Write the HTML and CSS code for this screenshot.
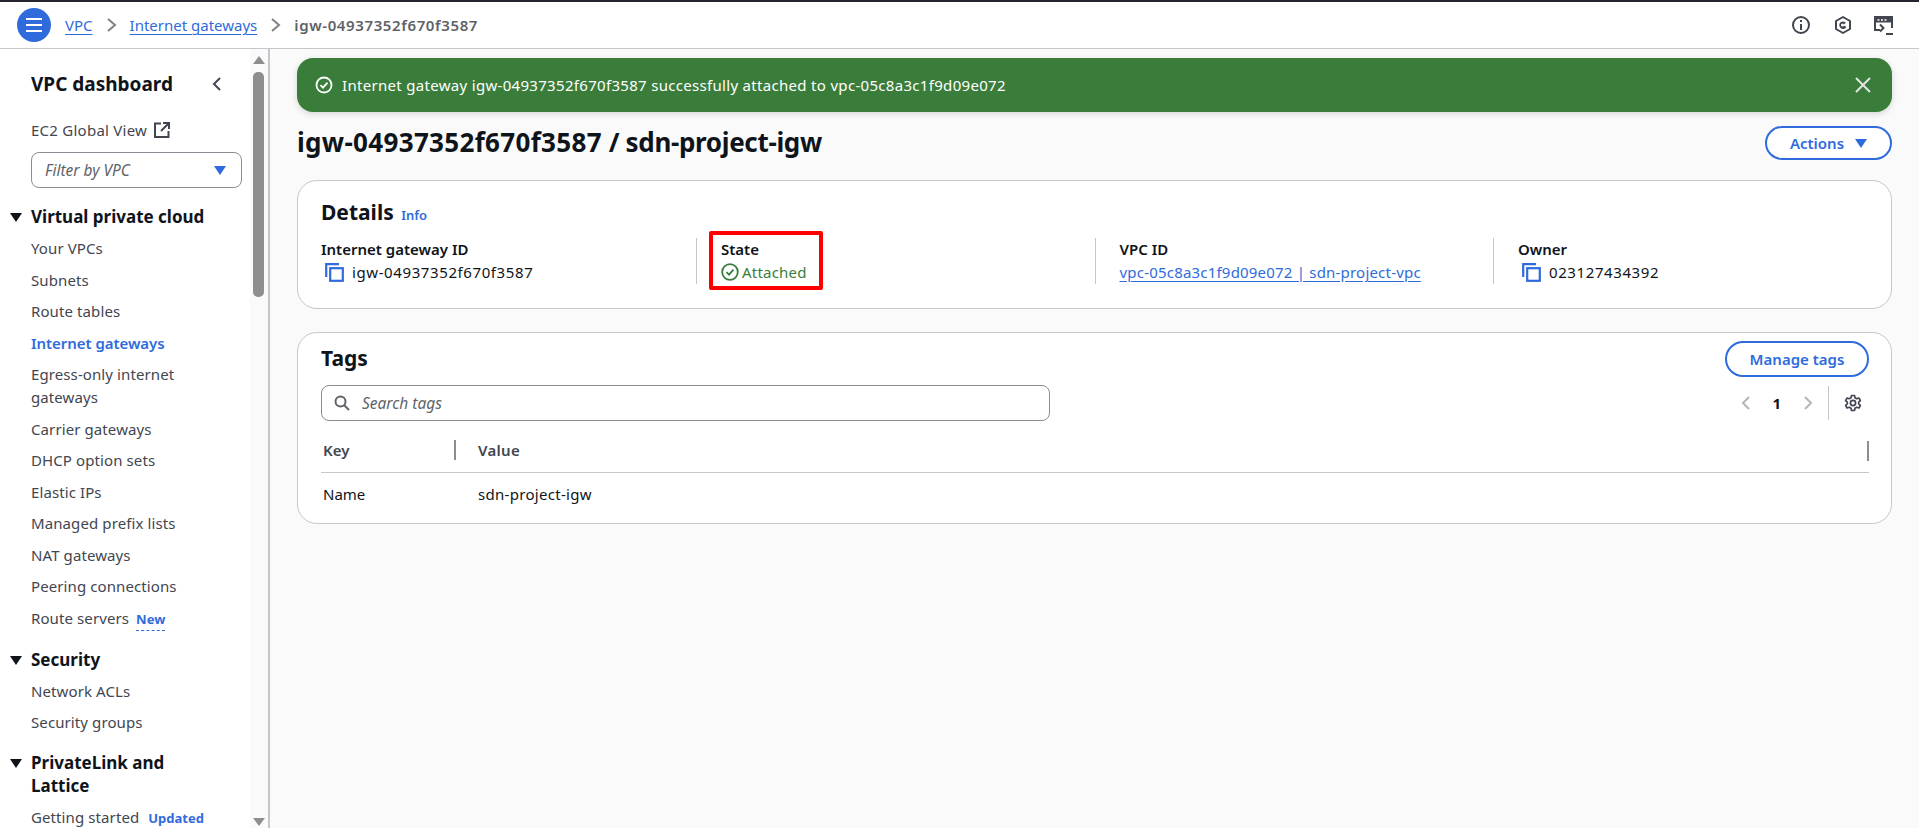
FILE: index.html
```html
<!DOCTYPE html>
<html lang="en">
<head>
<meta charset="utf-8">
<title>igw-04937352f670f3587</title>
<link rel="stylesheet" href="styles.css">
</head>
<body>
<header class="topbar">
  <button class="menu-btn" aria-label="Menu">
    <svg width="20" height="16" viewBox="0 0 20 16"><path d="M2 2h16M2 8h16M2 14h16" stroke="#fff" stroke-width="2" fill="none"/></svg>
  </button>
  <nav class="crumbs">
    <a class="link" href="#">VPC</a>
    <svg class="crumb-sep" width="12" height="16" viewBox="0 0 12 16"><path d="M2 2l7 6-7 6" stroke="#7d8188" stroke-width="2" fill="none"/></svg>
    <a class="link" href="#">Internet gateways</a>
    <svg class="crumb-sep" width="12" height="16" viewBox="0 0 12 16"><path d="M2 2l7 6-7 6" stroke="#7d8188" stroke-width="2" fill="none"/></svg>
    <span class="crumb-current">igw-04937352f670f3587</span>
  </nav>
  <div class="top-icons">
    <svg width="20" height="20" viewBox="0 0 20 20"><circle cx="10" cy="10" r="8" stroke="#424650" stroke-width="2" fill="none"/><path d="M10 9v6" stroke="#424650" stroke-width="2"/><path d="M10 5v2" stroke="#424650" stroke-width="2"/></svg>
    <svg width="20" height="20" viewBox="0 0 20 20"><path d="M10 2l7 4v8l-7 4-7-4V6z" stroke="#424650" stroke-width="2" fill="none" stroke-linejoin="round"/><path d="M13 7.800A3.800 3.800 0 1 0 13.400 12L10 10z" fill="#424650"/><circle cx="9.500" cy="10" r="1.500" fill="#fff"/></svg>
    <svg width="19" height="19" viewBox="0 0 19 19"><path d="M6 14H1V1h17v11" stroke="#424650" stroke-width="2" fill="none"/><path d="M1 4h17" stroke="#424650" stroke-width="5"/><path d="M6 8.500l3.500 3.500L6 15.500M12 18h7" stroke="#424650" stroke-width="2" fill="none"/><path d="M3.500 4h2M7 4h2M10.500 4h2" stroke="#fff" stroke-width="1.500"/></svg>
  </div>
</header>

<div class="shell">
  <aside class="sidebar">
    <div class="side-head">
      <h2 class="side-title">VPC dashboard</h2>
      <svg width="12" height="16" viewBox="0 0 12 16"><path d="M9 2L3 8l6 6" stroke="#424650" stroke-width="2" fill="none"/></svg>
    </div>
    <div class="global-view">
      <span>EC2 Global View</span>
      <svg width="16" height="16" viewBox="0 0 16 16"><path d="M7 1.500H1v13.500h13.500V9" stroke="#424650" stroke-width="2" fill="none"/><path d="M9 1h6v6M15 1L7 9" stroke="#424650" stroke-width="2" fill="none"/></svg>
    </div>
    <div class="vpc-filter">
      <span>Filter by VPC</span>
      <i class="caret blue"></i>
    </div>
    <div class="section first"><i class="caret dark"></i>Virtual private cloud</div>
    <a class="item">Your VPCs</a>
    <a class="item">Subnets</a>
    <a class="item">Route tables</a>
    <a class="item active">Internet gateways</a>
    <a class="item">Egress-only internet gateways</a>
    <a class="item">Carrier gateways</a>
    <a class="item">DHCP option sets</a>
    <a class="item">Elastic IPs</a>
    <a class="item">Managed prefix lists</a>
    <a class="item">NAT gateways</a>
    <a class="item">Peering connections</a>
    <a class="item">Route servers <b class="badge dashed">New</b></a>
    <div class="section"><i class="caret dark"></i>Security</div>
    <a class="item">Network ACLs</a>
    <a class="item">Security groups</a>
    <div class="section"><i class="caret dark"></i>PrivateLink and Lattice</div>
    <a class="item">Getting started <b class="badge updated">Updated</b></a>
    <div class="scroll-track">
      <i class="scroll-up"></i>
      <i class="scroll-thumb"></i>
      <i class="scroll-down"></i>
    </div>
  </aside>

  <main class="content">
    <div class="flash">
      <svg width="18" height="18" viewBox="0 0 18 18"><circle cx="9" cy="9" r="7.500" stroke="#fff" stroke-width="1.800" fill="none"/><path d="M5.500 9.200l2.500 2.500 4.500-5" stroke="#fff" stroke-width="1.800" fill="none"/></svg>
      <span class="flash-text">Internet gateway igw-04937352f670f3587 successfully attached to vpc-05c8a3c1f9d09e072</span>
      <svg class="flash-x" width="16" height="16" viewBox="0 0 16 16"><path d="M1 1l14 14M15 1L1 15" stroke="#e4e4e4" stroke-width="2"/></svg>
    </div>

    <div class="page-head">
      <h1><span class="h1-id">igw-04937352f670f3587</span> <span class="h1-name">/ sdn-project-igw</span></h1>
      <button class="btn actions">Actions <i class="caret blue"></i></button>
    </div>

    <section class="card details">
      <h2 class="card-title">Details <a class="info">Info</a></h2>
      <div class="kv-grid">
        <div class="kv">
          <div class="k">Internet gateway ID</div>
          <div class="v id">
            <svg class="copy" width="19" height="19" viewBox="0 0 19 19"><path d="M1.200 14V1.200H14" stroke="#2f6bdc" stroke-width="2.200" fill="none"/><rect x="5.200" y="5.200" width="12.600" height="12.600" stroke="#2f6bdc" stroke-width="2.200" fill="none"/></svg>
            igw-04937352f670f3587
          </div>
        </div>
        <div class="kv sep">
          <div class="k">State</div>
          <div class="v ok">
            <svg width="18" height="18" viewBox="0 0 18 18"><circle cx="9" cy="9" r="7.800" stroke="#3a7d3a" stroke-width="1.800" fill="none"/><path d="M5.500 9.200l2.500 2.500 4.500-5" stroke="#3a7d3a" stroke-width="1.800" fill="none"/></svg>
            Attached
          </div>
          <div class="highlight"></div>
        </div>
        <div class="kv sep">
          <div class="k">VPC ID</div>
          <div class="v"><a class="link vpc-link" href="#">vpc-05c8a3c1f9d09e072 | sdn-project-vpc</a></div>
        </div>
        <div class="kv sep">
          <div class="k">Owner</div>
          <div class="v id">
            <svg class="copy" width="19" height="19" viewBox="0 0 19 19"><path d="M1.200 14V1.200H14" stroke="#2f6bdc" stroke-width="2.200" fill="none"/><rect x="5.200" y="5.200" width="12.600" height="12.600" stroke="#2f6bdc" stroke-width="2.200" fill="none"/></svg>
            023127434392
          </div>
        </div>
      </div>
    </section>

    <section class="card tags">
      <div class="tags-head">
        <h2 class="card-title">Tags</h2>
        <button class="btn manage">Manage tags</button>
      </div>
      <div class="tools">
        <div class="search">
          <svg width="16" height="16" viewBox="0 0 16 16"><circle cx="6.500" cy="6.500" r="5" stroke="#5f6368" stroke-width="2" fill="none"/><path d="M10 10l5 5" stroke="#5f6368" stroke-width="2"/></svg>
          <span>Search tags</span>
        </div>
        <div class="pager">
          <svg width="12" height="16" viewBox="0 0 12 16"><path d="M9 2L3 8l6 6" stroke="#b4b4bb" stroke-width="2" fill="none"/></svg>
          <b>1</b>
          <svg width="12" height="16" viewBox="0 0 12 16"><path d="M3 2l6 6-6 6" stroke="#b4b4bb" stroke-width="2" fill="none"/></svg>
          <span class="pager-sep"></span>
          <svg class="gear" width="18" height="18" viewBox="0 0 18 18"><path d="M7.500 1.500h3l.5 2.200 1.700 1 2.200-.7 1.500 2.600-1.700 1.500v1.800l1.700 1.500-1.500 2.600-2.200-.7-1.700 1-.5 2.200h-3l-.5-2.200-1.700-1-2.200.7-1.500-2.600 1.700-1.500V8.100L1.600 6.600 3.100 4l2.200.7 1.700-1z" stroke="#424650" stroke-width="1.700" fill="none" stroke-linejoin="round"/><circle cx="9" cy="9" r="2.600" stroke="#424650" stroke-width="1.700" fill="none"/></svg>
        </div>
      </div>
      <div class="t-head">
        <div class="t-key">Key</div>
        <div class="t-val">Value</div>
      </div>
      <div class="t-row">
        <div class="t-key">Name</div>
        <div class="t-val">sdn-project-igw</div>
      </div>
    </section>
  </main>
</div>
</body>
</html>
```
FILE: styles.css
```css
* { box-sizing: border-box; }
html, body { margin: 0; height: 100%; overflow: hidden; }
body {
  font-family: "Noto Sans", "Open Sans", sans-serif;
  font-size: 15px;
  color: #0f141a;
  background: #fafafa;
  display: flex;
  flex-direction: column;
}
h1, h2 { margin: 0; }
a { text-decoration: none; }
.link { color: #2f6bdc; text-decoration: underline; text-underline-offset: 3px; }

.topbar {
  height: 49px;
  flex: none;
  background: #fff;
  border-top: 2px solid #232630;
  border-bottom: 1px solid #c6c6cd;
  display: flex;
  align-items: center;
  padding: 0 26px 0 17px;
}
.menu-btn {
  width: 34px; height: 34px; border-radius: 50%;
  border: 0; padding: 0;
  background: #2f6bdc;
  display: flex; align-items: center; justify-content: center;
}
.crumbs { display: flex; align-items: center; margin-left: 14px; }
.crumb-sep { margin: 0 12px 0 13px; }
.crumb-current { color: #5f6368; font-weight: 600; letter-spacing: .62px; }
.top-icons { margin-left: auto; display: flex; align-items: center; gap: 21.500px; }

.shell { flex: 1; display: flex; min-height: 0; }

.sidebar {
  position: relative;
  width: 270px;
  flex: none;
  background: #fff;
  border-right: 2px solid #c6c6cd;
  padding: 20px 0 0 31px;
  overflow: hidden;
  color: #424650;
}
.side-head {
  width: 192px;
  display: flex; align-items: center; justify-content: space-between;
  height: 30px;
}
.side-title { font-size: 19px; font-weight: 700; color: #0f141a; }
.global-view {
  display: flex; align-items: center; gap: 7px;
  margin-top: 19px; height: 24px;
  color: #424650;
  letter-spacing: .25px;
}
.vpc-filter {
  width: 211px; height: 36px;
  margin-top: 10px;
  border: 1px solid #8c8c94;
  border-radius: 8px;
  display: flex; align-items: center; justify-content: space-between;
  padding: 0 15px 0 13px;
  font-style: italic;
  font-size: 15.500px;
  color: #5f6368;
}
.caret { display: inline-block; width: 0; height: 0; border-left: 6px solid transparent; border-right: 6px solid transparent; border-top: 9px solid; }
.caret.blue { border-top-color: #2f6bdc; }
.caret.dark { border-top-color: #0f141a; position: absolute; left: -21px; top: 7px; }
.section {
  position: relative;
  width: 170px;
  font-size: 17px; font-weight: 700; color: #0f141a;
  line-height: 22.500px;
  margin-top: 13.500px; margin-bottom: 4.500px;
}
.section.first { margin-top: 18px; width: 200px; }
.item { display: block; line-height: 23px; padding: 4.250px 0; width: 195px; color: #424650; letter-spacing: .1px; }
.item.active { color: #2f6bdc; font-weight: 600; letter-spacing: -.05px; }
.badge { color: #2f6bdc; font-weight: 700; font-size: 13px; margin-left: 3px; letter-spacing: 0; }
.badge.updated { margin-left: 5px; }
.badge.dashed { border-bottom: 1px dashed #2f6bdc; padding-bottom: 2px; }
.scroll-track {
  position: absolute; top: 0; right: 0; bottom: 0; width: 18px;
  background: #fafafa;
}
.scroll-thumb {
  position: absolute; left: 3px; top: 23px;
  width: 11px; height: 225px; border-radius: 5px;
  background: #8e8e8e;
}
.scroll-up, .scroll-down {
  position: absolute; left: 3px; width: 0; height: 0;
  border-left: 6px solid transparent; border-right: 6px solid transparent;
}
.scroll-up { top: 7px; border-bottom: 8px solid #8e8e8e; }
.scroll-down { bottom: 2px; border-top: 8px solid #8e8e8e; }

.content { flex: 1; min-width: 0; padding: 9px 27px 0 27px; }
.flash {
  height: 54px;
  background: #3a7d3a;
  border-radius: 16px;
  color: #fff;
  display: flex; align-items: center;
  padding: 0 21px 0 18px;
  box-shadow: 0 2px 6px rgba(0, 0, 0, .15);
}
.flash-text { margin-left: 9px; letter-spacing: .31px; }
.flash-x { margin-left: auto; }
.page-head {
  display: flex; align-items: center; justify-content: space-between;
  margin-top: 13px; height: 34px;
}
h1 { font-size: 26px; font-weight: 700; line-height: 34px; }
.h1-id { letter-spacing: .33px; }
.h1-name { letter-spacing: -.33px; }
.btn {
  background: #fff; color: #2f6bdc;
  border: 2px solid #2f6bdc; border-radius: 20px;
  font: 600 15px "Noto Sans", sans-serif;
  display: flex; align-items: center; justify-content: center;
}
.actions { width: 127px; height: 34px; gap: 11px; margin-top: 2px; }
.card {
  background: #fff;
  border: 1px solid #c6c6cd;
  border-radius: 20px;
  padding: 16px 22px 16px 23px;
}
.details { height: 129px; margin-top: 21px; }
.card-title { font-size: 21px; font-weight: 700; line-height: 30px; }
.tags .card-title { padding-bottom: 2px; line-height: 28px; }
.info { color: #2f6bdc; font-size: 13px; font-weight: 600; margin-left: 2px; }
.kv-grid { display: grid; grid-template-columns: 399px 398.500px 398.500px 398.500px; margin-top: 8px; }
.kv { position: relative; height: 46px; }
.kv.sep { padding-left: 24px; margin-left: -24px; border-left: 1px solid #c6c6cd; }
.k { font-weight: 600; line-height: 22px; }
.v { display: flex; align-items: center; line-height: 24px; }
.id { letter-spacing: .6px; }
.vpc-link { letter-spacing: .2px; }
.copy { margin: 0 8px 0 4px; }
.ok { color: #3a7d3a; gap: 3px; letter-spacing: .2px; }
.highlight {
  position: absolute; left: 12px; top: -7px;
  width: 114px; height: 59px;
  border: 4px solid #f00;
  border-radius: 2px;
}
.tags { height: 192px; margin-top: 23px; padding-top: 8px; }
.tags-head { display: flex; align-items: center; justify-content: space-between; height: 36px; }
.manage { width: 144px; height: 36px; }
.tools { display: flex; align-items: center; justify-content: space-between; margin-top: 8px; height: 36px; }
.search {
  width: 729px; height: 36px;
  border: 1px solid #8c8c94;
  border-radius: 8px;
  display: flex; align-items: center; gap: 12px;
  padding: 0 12px;
  color: #5f6368;
  font-style: italic;
  font-size: 15.500px;
}
.pager { display: flex; align-items: center; }
.pager b { margin: 0 21px 0 20px; }
.pager-sep { width: 1px; height: 34px; background: #c6c6cd; margin: 0 15px 0 14px; }
.gear { margin-right: 7px; }
.t-head {
  display: flex; align-items: center;
  height: 52px;
  border-bottom: 1px solid #c6c6cd;
  font-weight: 600; color: #424650;
  padding-top: 7px;
  position: relative;
}
.t-head::after {
  content: ""; position: absolute; right: 0; top: 20px;
  width: 2px; height: 20px; background: #8c8c94;
}
.t-key { width: 157px; padding-left: 2px; }
.t-val { flex: 1; letter-spacing: .3px; }
.t-head .t-key { border-right: 2px solid #8c8c94; line-height: 20px; margin-right: 22px; width: 135px; }
.t-row { display: flex; align-items: center; height: 43px; padding-bottom: 2px; }
```
